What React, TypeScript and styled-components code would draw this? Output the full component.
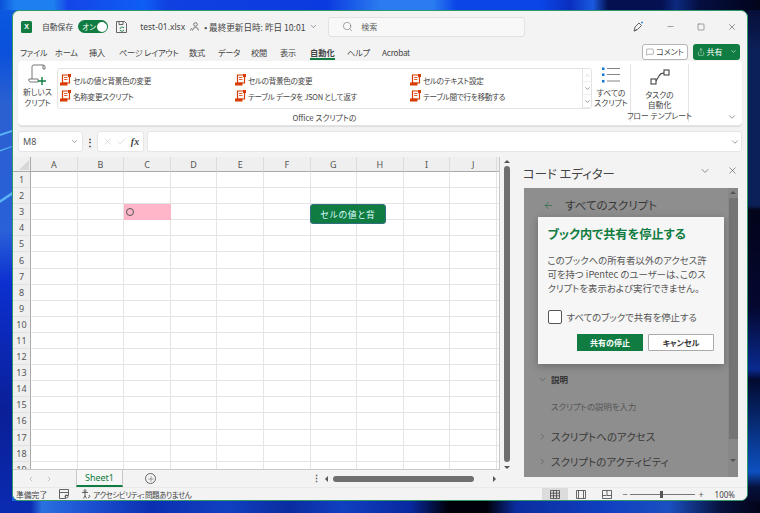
import React from "react";
import styled, { createGlobalStyle } from "styled-components";
import { ChevronDown, ChevronRight, Search, X, Minus, Square, ArrowLeft, Check, MessageSquare, Share, Plus } from "lucide-react";

const Global = createGlobalStyle`
  html, body { margin: 0; padding: 0; width: 760px; height: 513px; overflow: hidden; background: #0a2a9c; }
  * { box-sizing: border-box; }
  #root { width: 760px; height: 513px; }
`;
const FONT = `"Noto Sans CJK JP", "Noto Sans", sans-serif`;

const Desktop = styled.div`
  position: relative; width: 760px; height: 513px; padding: 10px 12px 12px;
  font-family: ${FONT}; font-feature-settings: "palt" 1; color: #333; overflow: hidden;
`;
const Wallpaper = styled.svg`position: absolute; inset: 0; width: 760px; height: 513px;`;
const Win = styled.div`
  position: relative; width: 736px; height: 491px; background: #f3f3f3;
  border: 1px solid #2f9a68; border-radius: 7px; overflow: hidden;
  display: flex; flex-direction: column;
`;
const Title = styled.div`
  height: 31px; display: flex; align-items: center; padding-left: 8px; flex: none; position: relative; font-size: 7.8px; color: #444;
`;
const XlLogo = styled.div`
  width: 11px; height: 12px; background: #107c41; border-radius: 1.5px; color: #fff; font-size: 7px; font-weight: 700;
  font-family: "Liberation Sans", sans-serif; display: flex; align-items: center; justify-content: center; margin-right: 10px;
`;
const Toggle = styled.div`
  width: 30px; height: 13px; border-radius: 7px; background: #107c41; color: #fff; font-size: 7.5px; margin: 0 8px 0 5px;
  display: flex; align-items: center; justify-content: space-between; padding: 0 1.5px 0 4px;
  i { width: 10px; height: 10px; border-radius: 50%; background: #fff; display: block; }
`;
const FileName = styled.span`font-size: 8.5px; margin: 0 5px 0 13px; font-family: "Noto Sans", sans-serif;`;
const Meta = styled.span`font-size: 8.6px; width: 113px; display: inline-flex; align-items: center; gap: 3px; margin-left: 5px; white-space: nowrap;`;
const SearchBox = styled.div`
  margin-left: 11px; width: 197px; height: 20px; border: 1px solid #e2e2e2; border-radius: 3px; background: #f8f8f8;
  display: flex; align-items: center; padding-left: 13px; gap: 8px; font-size: 8px; color: #666;
`;
const WinButtons = styled.div`
  margin-left: auto; display: flex; align-items: center; gap: 22px; padding-right: 10px; color: #444;
`;
const Tabs = styled.div`
  height: 19px; flex: none; display: flex; align-items: center; font-size: 8.2px; padding: 0 0 0 7px; color: #444; gap: 0;
`;
const Tab = styled.div<{ $w: number; $on?: boolean }>`
  width: ${p => p.$w}px; flex: none; position: relative; white-space: nowrap; font-weight: ${p => (p.$on ? 700 : 400)};
  letter-spacing: ${p => (p.$on ? "0" : "-.25px")};
  &::after { content: ""; display: ${p => (p.$on ? "block" : "none")}; position: absolute; left: 0; width: 25px; bottom: -2px; height: 1.5px; background: #107c41; }
`;
const TabActions = styled.div`margin-left: auto; display: flex; gap: 5px; padding-right: 7px;`;
const CommentBtn = styled.div`
  width: 46px; height: 16px; border: 1px solid #b5b5b5; border-radius: 3px; background: #fff; font-size: 8px;
  display: flex; align-items: center; justify-content: center; gap: 2px; margin-left: 0;
`;
const ShareBtn = styled.div`
  width: 47px; height: 16px; border-radius: 3px; background: #107c41; color: #fff; font-size: 8px;
  display: flex; align-items: center; justify-content: center; gap: 2px;
`;
const Ribbon = styled.div`
  height: 65px; flex: none; margin: 0 5px; background: #fff; border-radius: 4px; border-bottom: 1px solid #e4e4e4;
  display: flex; position: relative; box-shadow: 0 1px 1px #ddd;
`;
const NewScript = styled.div`
  width: 39px; flex: none; display: flex; flex-direction: column; align-items: center; padding-top: 3px; font-size: 7.8px; line-height: 11px; text-align: center; color: #444;
`;
const GroupCol = styled.div`width: 535px; flex: none; display: flex; flex-direction: column; align-items: stretch;`;
const Gallery = styled.div`
  margin-top: 7px; height: 41px; border: 1px solid #e3e3e3; border-radius: 3px; display: flex; position: relative; padding: 3px 0 0 2px;
`;
const GalleryGrid = styled.div`
  flex: 1; display: grid; grid-template-columns: 175px 175px 1fr; grid-auto-rows: 16px;
`;
const Item = styled.div`
  display: flex; align-items: center; gap: 2px; font-size: 7.6px; letter-spacing: -.3px; color: #444; white-space: nowrap;
`;
const GalleryScroll = styled.div`
  width: 9px; flex: none; border-left: 1px solid #e3e3e3; margin-top: -3px; display: flex; flex-direction: column; color: #555;
  span { height: 13px; display: flex; align-items: center; justify-content: center; font-size: 6px; border-bottom: 1px solid #eee; }
`;
const GroupLabel = styled.div`font-size: 7.8px; text-align: center; height: 16px; line-height: 17px; color: #444;`;
const BigBtn = styled.div`
  width: 38px; flex: none; display: flex; flex-direction: column; align-items: center; padding-top: 6px; font-size: 7.8px; line-height: 9.5px; text-align: center; color: #444;
`;
const FlowGroup = styled.div`
  width: 59px; flex: none; margin-top: 3px; height: 58px; border-left: 1px solid #e3e3e3; border-right: 1px solid #e3e3e3;
  display: flex; flex-direction: column; align-items: center; font-size: 7.8px; line-height: 9.5px; text-align: center; color: #444;
  padding-top: 3px;
`;
const FlowCaption = styled.div`margin-top: auto; white-space: nowrap; font-size: 7.8px; line-height: 12px;`;
const RibbonChevron = styled.div`position: absolute; right: 5px; bottom: 3px; color: #444; display: flex;`;
const FormulaBar = styled.div`
  height: 21px; flex: none; margin: 5px 5px 0; display: flex; align-items: stretch; gap: 0;
`;
const NameBox = styled.div`
  width: 65px; background: #fff; border: 1px solid #e6e6e6; border-radius: 3px; font-size: 9px; color: #555;
  display: flex; align-items: center; justify-content: space-between; padding: 0 3px 0 4px; font-family: "Noto Sans", sans-serif;
`;
const Dots = styled.div`width: 14px; display: flex; align-items: center; justify-content: center; font-weight: 700; font-size: 10px;`;
const FnBox = styled.div`
  width: 47px; background: #fff; border: 1px solid #e6e6e6; border-radius: 3px; display: flex; align-items: center; justify-content: space-around; padding: 0 2px; color: #bbb;
  em { font-family: "Liberation Serif", serif; color: #444; font-size: 10px; font-weight: 700; }
`;
const FormulaInput = styled.div`
  flex: 1; margin-left: 3px; background: #fff; border: 1px solid #e6e6e6; border-radius: 3px; display: flex; align-items: center; justify-content: flex-end; padding-right: 1px; color: #444;
`;
const Main = styled.div`flex: 1; min-height: 0; display: flex; margin-top: 5px;`;
const SheetCol = styled.div`width: 500px; flex: none; display: flex; flex-direction: column;`;
const SheetArea = styled.div`height: 313px; flex: none; display: flex; position: relative;`;
const SheetGrid = styled.div`
  width: 487px; flex: none; overflow: hidden; display: grid; grid-template-columns: 18px repeat(10, 46.6px) 3px; grid-auto-rows: 16.1px; grid-template-rows: 15px;
  border-right: 1px solid #c8c8c8; border-bottom: 1px solid #c8c8c8; align-content: start; background: #fff; height: 313px;
`;
const Corner = styled.div`background: #efefef; border-bottom: 1px solid #aaa; border-right: 1px solid #aaa; position: relative;
  &::after { content: ""; position: absolute; right: 1px; bottom: 1px; border: 5px solid transparent; border-right-color: #d8d8d8; border-bottom-color: #d8d8d8; }
`;
const ColHead = styled.div`
  background: #efefef; border-bottom: 1px solid #aaa; border-right: 1px solid #dcdcdc; font-size: 9px; color: #555;
  display: flex; align-items: center; justify-content: center; font-family: "Noto Sans", sans-serif;
`;
const RowHead = styled.div`
  background: #efefef; border-right: 1px solid #aaa; border-bottom: 1px solid #e0e0e0; font-size: 9px; color: #555;
  display: flex; align-items: center; justify-content: center; font-family: "Noto Sans", sans-serif;
`;
const Cell = styled.div<{ $pink?: boolean }>`
  background: ${p => (p.$pink ? "#ffb6c8" : "#fff")}; border-right: 1px solid ${p => (p.$pink ? "#ffb6c8" : "#e4e4e4")}; border-bottom: 1px solid ${p => (p.$pink ? "#ffb6c8" : "#e4e4e4")};
  display: flex; align-items: center; padding-left: 2px;
`;
const Ring = styled.span`width: 8px; height: 8px; border: 1px solid #555; border-radius: 50%; display: block;`;
const ScriptButton = styled.div`
  position: absolute; left: 297px; top: 47px; width: 76px; height: 20px; border-radius: 3px; background: #107c41; border: 1px solid #2f6f80;
  color: #dff; font-size: 8.8px; display: flex; align-items: center; justify-content: center; letter-spacing: .8px;
`;
const VScroll = styled.div`
  width: 13px; flex: none; display: flex; flex-direction: column; align-items: center; background: #f3f3f3; padding-top: 3px; position: relative;
  b { width: 6px; height: 296px; border-radius: 3px; background: #6f6f6f; margin-top: 3px; display: block; }
`;
const Tri = styled.span<{ $d: "up" | "down" | "left" | "right" }>`
  display: block; width: 0; height: 0; border: 3.5px solid transparent; flex: none;
  ${p => p.$d === "up" && "border-bottom-color:#555;border-top-width:0;"}
  ${p => p.$d === "down" && "border-top-color:#555;border-bottom-width:0;"}
  ${p => p.$d === "left" && "border-right-color:#555;border-left-width:0;"}
  ${p => p.$d === "right" && "border-left-color:#555;border-right-width:0;"}
`;
const VDown = styled.div`margin-top: auto; margin-bottom: 1px;`;
const PanelDown = styled.div`margin-top: auto; margin-bottom: 15px;`;
const SheetTabs = styled.div`height: 17px; flex: none; display: flex; align-items: center; position: relative; background: #f3f3f3;`;
const NavArrows = styled.div`width: 64px; flex: none; display: flex; justify-content: center; padding-right: 10px; gap: 10px; color: #aaa;`;
const ActiveTab = styled.div`
  width: 47px; height: 17px; flex: none; margin-left: -1px; background: #f6f6f6; border-left: 1px solid #c8c8c8; border-right: 1px solid #c8c8c8; border-bottom: 2px solid #107c41; color: #107c41;
  font-size: 9px; text-align: center; line-height: 15px; font-family: "Noto Sans", sans-serif;
`;
const AddSheet = styled.div`
  width: 11px; height: 11px; border-radius: 50%; border: 1px solid #666; margin-left: 22px; display: flex; align-items: center; justify-content: center; color: #555;
`;
const HScroll = styled.div`
  margin-left: auto; display: flex; align-items: center; width: 201px; padding-right: 15px; gap: 3px; flex: none;
  i { font-style: normal; font-weight: 700; font-size: 9px; color: #555; margin-right: 8px; line-height: 8px; width: 2px; flex: none; }
  b { display: block; width: 141px; height: 6px; border-radius: 3px; background: #6f6f6f; margin: 0 16px 0 2px; flex: none; }
`;
const Pane = styled.div`flex: 1; min-width: 0; position: relative; display: flex; flex-direction: column; padding: 0 9px 0 11px;`;
const PaneHead = styled.div`
  height: 31px; flex: none; display: flex; align-items: center; font-size: 12.4px; color: #444; justify-content: space-between; padding-top: 3px; margin-left: -1px;
`;
const PaneIcons = styled.div`display: flex; gap: 16px; color: #444; margin-top: -7px; margin-right: 0; align-items: center;`;
const Panel = styled.div`
  height: 289px; flex: none; background: #8e8e8e; position: relative; display: flex; flex-direction: column; padding: 6px 0 0 18px; color: #333; overflow: hidden;
`;
const PanelScroll = styled.div`
  position: absolute; right: 0; top: 0; bottom: 0; width: 10px; background: #888; display: flex; flex-direction: column; align-items: center; padding-top: 3px;
  b { display: block; width: 9px; height: 241px; background: #757575; margin-top: 4px; }
`;
const Back = styled.div`display: flex; align-items: center; gap: 11px; margin-left: 1px; font-size: 11.5px; color: #383838; height: 20px; margin-top: 1px; white-space: nowrap;
  svg { color: #1c6a40; }
`;
const SectionDesc = styled.div`
  margin-top: 157px; margin-left: -4px; display: flex; align-items: center; gap: 4px; font-size: 8.5px; font-weight: 700; height: 14px; color: #333;
  svg { color: #444; }
`;
const DescHint = styled.div`font-size: 8.4px; margin: 13px 0 0 9px; height: 14px; line-height: 14px; color: #555;`;
const Section = styled.div`
  display: flex; align-items: center; gap: 4px; font-size: 10.5px; height: 25px; margin-left: -4px; color: #3a3a3a; white-space: nowrap;
  svg { color: #444; }
`;
const FirstSection = styled(Section)`margin-top: 11px;`;
const Dialog = styled.div`
  position: absolute; left: 14px; top: 29px; width: 186px; height: 147px; background: #f6f6f6; box-shadow: 0 2px 8px rgba(0,0,0,.25);
  padding: 7px 10px 0 9.5px; display: flex; flex-direction: column;
`;
const DlgTitle = styled.div`font-size: 12.2px; font-weight: 700; color: #107c41; line-height: 20px; white-space: nowrap;`;
const DlgBody = styled.div`font-size: 9.4px; line-height: 14px; color: #555; margin-top: 9px; height: 42px; white-space: nowrap;`;
const CheckRow = styled.div`display: flex; align-items: center; gap: 5px; font-size: 9.4px; color: #555; margin-top: 15px; white-space: nowrap;`;
const Box = styled.span`width: 14px; height: 14px; border: 1px solid #555; border-radius: 2px; background: #fff; flex: none;`;
const DlgBtns = styled.div`display: flex; justify-content: flex-end; gap: 5px; margin-top: 10px;`;
const Primary = styled.div`
  width: 66px; height: 17px; background: #107c41; color: #fff; font-size: 8px; font-weight: 700; display: flex; align-items: center; justify-content: center;
`;
const Secondary = styled.div`
  width: 66px; height: 17px; background: #fff; border: 1px solid #aaa; border-radius: 1px; color: #333; font-size: 8px; font-weight: 700; display: flex; align-items: center; justify-content: center;
`;
const Status = styled.div`
  height: 13px; flex: none; display: flex; align-items: center; font-size: 7.8px; color: #444; padding-left: 3px; background: #f3f3f3; border-top: 1px solid #eaeaea; position: relative;
`;
const StatusGap = styled.span`margin-left: 12px; display: inline-flex; align-items: center; gap: 2px; white-space: nowrap;`;
const AccText = styled.span`font-size: 7.5px; letter-spacing: -.45px;`;
const StatusRight = styled.div`margin-left: auto; display: flex; align-items: center; height: 100%; padding-right: 12px; font-family: "Noto Sans", sans-serif;`;
const ViewBtn = styled.div<{ $on?: boolean }>`
  width: 26px; height: 13px; background: ${p => (p.$on ? "#dcdcdc" : "transparent")}; display: flex; align-items: center; justify-content: center;
`;
const Zoom = styled.div`
  display: flex; align-items: center; gap: 3px; margin-left: 2px; color: #555; font-size: 9px;
`;
const ZoomTrack = styled.div`
  width: 65px; height: 1px; background: #777; position: relative; flex: none;
  &::after { content: ""; position: absolute; left: 30px; top: -3px; width: 3px; height: 7px; background: #555; }
`;
const ZoomVal = styled.span`margin-left: 8px; font-size: 8px; color: #444;`;

const ScriptIcon = () => (
  <svg width="11" height="12" viewBox="0 0 11 12" style={{ flex: "none" }}>
    <path d="M2.5 1h7v8h-7z" fill="#fff" stroke="#d83b01" strokeWidth="1.2" />
    <rect x="8" y="0" width="3" height="3" fill="#d83b01" />
    <rect x="0" y="8.5" width="7.5" height="3" fill="#d83b01" />
    <path d="M4 3.5h3.5M4 5.5h3.5" stroke="#d83b01" strokeWidth=".8" />
  </svg>
);

const items = [
  "セルの値と背景色の変更", "セルの背景色の変更", "セルのテキスト設定",
  "名称変更スクリプト", "テーブル データを JSON として返す", "テーブル間で行を移動する",
];
const cols = ["A", "B", "C", "D", "E", "F", "G", "H", "I", "J", ""];
const rows = Array.from({ length: 19 }, (_, i) => i + 1);
const tabs: [string, number, boolean?][] = [
  ["ファイル", 35], ["ホーム", 34], ["挿入", 30], ["ページ レイアウト", 70], ["数式", 29], ["データ", 33], ["校閲", 29], ["表示", 30], ["自動化", 37, true], ["ヘルプ", 35], ["Acrobat", 40],
];

export default function App() {
  return (
    <Desktop>
      <Global />
      <Wallpaper viewBox="0 0 760 513" preserveAspectRatio="none">
        <defs>
          <linearGradient id="bg" x1="0" y1="0" x2="1" y2="0">
            <stop offset="0" stopColor="#1560dc" />
            <stop offset="0.5" stopColor="#0a3cc0" />
            <stop offset="1" stopColor="#020824" />
          </linearGradient>
          <linearGradient id="top" x1="0" y1="0" x2="1" y2="0">
            <stop offset="0" stopColor="#0a4fd8" />
            <stop offset="0.02" stopColor="#1e80f0" />
            <stop offset="0.07" stopColor="#1e80f0" />
            <stop offset="0.09" stopColor="#1545e8" />
            <stop offset="0.19" stopColor="#0e5ef5" />
            <stop offset="0.22" stopColor="#1040e0" />
            <stop offset="0.43" stopColor="#0b3be0" />
            <stop offset="0.5" stopColor="#2a7cf0" />
            <stop offset="0.57" stopColor="#2a7cf0" />
            <stop offset="0.6" stopColor="#0b45e8" />
            <stop offset="0.71" stopColor="#0b45e8" />
            <stop offset="0.75" stopColor="#0a2fc0" />
            <stop offset="0.78" stopColor="#1a5ae0" />
            <stop offset="0.8" stopColor="#041050" />
            <stop offset="0.87" stopColor="#041050" />
            <stop offset="0.89" stopColor="#0c2a80" />
            <stop offset="0.92" stopColor="#050e40" />
            <stop offset="1" stopColor="#02041a" />
          </linearGradient>
          <linearGradient id="bottom" x1="0" y1="0" x2="1" y2="0">
            <stop offset="0" stopColor="#0a2ab0" />
            <stop offset="0.04" stopColor="#0a2ab0" />
            <stop offset="0.055" stopColor="#2a70e0" />
            <stop offset="0.12" stopColor="#1a50d0" />
            <stop offset="0.2" stopColor="#0a30b0" />
            <stop offset="0.3" stopColor="#1040c0" />
            <stop offset="0.38" stopColor="#0a2ca0" />
            <stop offset="0.45" stopColor="#1040c0" />
            <stop offset="0.54" stopColor="#0828a0" />
            <stop offset="0.59" stopColor="#000008" />
            <stop offset="0.64" stopColor="#000008" />
            <stop offset="0.68" stopColor="#0a2ea0" />
            <stop offset="0.8" stopColor="#1040c0" />
            <stop offset="0.88" stopColor="#1a50c0" />
            <stop offset="0.95" stopColor="#06103a" />
            <stop offset="1" stopColor="#02041a" />
          </linearGradient>
          <linearGradient id="left" x1="0" y1="0" x2="0" y2="1">
            <stop offset="0" stopColor="#0a5ce0" />
            <stop offset="0.1" stopColor="#0a50dc" />
            <stop offset="0.2" stopColor="#2a60d0" />
            <stop offset="0.45" stopColor="#2a60d8" />
            <stop offset="0.55" stopColor="#0c30d0" />
            <stop offset="0.8" stopColor="#0a1f98" />
            <stop offset="1" stopColor="#0a2ab0" />
          </linearGradient>
          <linearGradient id="right" x1="0" y1="0" x2="0" y2="1">
            <stop offset="0" stopColor="#050a30" />
            <stop offset="0.1" stopColor="#0c2058" />
            <stop offset="0.4" stopColor="#0c2058" />
            <stop offset="0.41" stopColor="#02041a" />
            <stop offset="0.6" stopColor="#040830" />
            <stop offset="0.72" stopColor="#0a2a90" />
            <stop offset="0.74" stopColor="#020a30" />
            <stop offset="0.92" stopColor="#0d50c0" />
            <stop offset="0.95" stopColor="#06103a" />
            <stop offset="1" stopColor="#02041a" />
          </linearGradient>
        </defs>
        <rect width="760" height="513" fill="url(#bg)" />
        <rect x="0" y="0" width="12" height="513" fill="url(#left)" />
        <rect x="748" y="0" width="12" height="513" fill="url(#right)" />
        <rect x="0" y="0" width="760" height="10" fill="url(#top)" />
        <rect x="0" y="501" width="760" height="12" fill="url(#bottom)" />
        <path d="M0 134 L12 130 L12 132 L0 136z M0 200 L12 192 L12 195 L0 203z M0 150 L12 146 L12 147 L0 151.5z" fill="#5ab4f4" />
      </Wallpaper>
      <Win>
        <Title>
          <XlLogo>X</XlLogo>
          <span>自動保存</span>
          <Toggle>オン<i /></Toggle>
          <svg width="11" height="12" viewBox="0 0 11 12" fill="none" stroke="#555" strokeWidth=".9">
            <path d="M.5.5h8l2 2v9H.5z" /><path d="M3 .5v3h4v-3" /><path d="M4 8a2.2 2.2 0 0 1 4-1M8 9a2.2 2.2 0 0 1-4 0" stroke="#107c41" />
          </svg>
          <FileName>test-01.xlsx</FileName>
          <svg width="9" height="9" viewBox="0 0 9 9" fill="none" stroke="#555" strokeWidth=".8">
            <circle cx="5.5" cy="2.5" r="1.8" /><path d="M2.5 8.5a3 3 0 0 1 6 0M.5 8.5a2 2 0 0 1 1.5-2" />
          </svg>
          <Meta>• 最終更新日時: 昨日 10:01 <ChevronDown size={9} strokeWidth={1.4} /></Meta>
          <SearchBox><Search size={11} strokeWidth={1.2} />検索</SearchBox>
          <WinButtons>
            <svg width="11" height="12" viewBox="0 0 11 12" fill="none" stroke="#555" strokeWidth=".9">
              <path d="M1 10l1-4 4-4 2.5 2.5-4 4zM1 10l3-1.5" /><path d="M9 .5v2M8 1.5h2" stroke="#2b88d8" />
            </svg>
            <Minus size={9} strokeWidth={1.3} />
            <Square size={8} strokeWidth={1.4} />
            <X size={10} strokeWidth={1.3} />
          </WinButtons>
        </Title>
        <Tabs>
          {tabs.map(([t, w, on]) => <Tab key={t} $w={w} $on={on}>{t}</Tab>)}
          <TabActions>
            <CommentBtn><MessageSquare size={8} strokeWidth={1.2} />コメント</CommentBtn>
            <ShareBtn><Share size={8} strokeWidth={1.3} />共有<ChevronDown size={7} strokeWidth={2} style={{ marginLeft: 5 }} /></ShareBtn>
          </TabActions>
        </Tabs>
        <Ribbon>
          <NewScript>
            <svg width="20" height="22" viewBox="0 0 20 22" fill="none" stroke="#666" strokeWidth=".9">
              <path d="M5 1h10v4M5 1a2 2 0 0 0-1 2v12M15 1a2 2 0 0 1 2 2v2h-2M1 15h9v3H3a2 2 0 0 1-2-3z" />
              <path d="M14 13v8M10 17h8" stroke="#107c41" strokeWidth="1.4" />
            </svg>
            <span>新しいス</span><span>クリプト</span>
          </NewScript>
          <GroupCol>
            <Gallery>
              <GalleryGrid>
                {items.map(t => <Item key={t}><ScriptIcon />{t}</Item>)}
              </GalleryGrid>
              <GalleryScroll>
                <span><ChevronDown size={7} style={{ transform: "rotate(180deg)", color: "#bbb" }} /></span>
                <span><ChevronDown size={7} /></span>
                <span><ChevronDown size={7} /></span>
              </GalleryScroll>
            </Gallery>
            <GroupLabel>Office スクリプトの</GroupLabel>
          </GroupCol>
          <BigBtn>
            <svg width="20" height="17" viewBox="0 0 20 17" style={{ marginBottom: 4 }}>
              <path d="M1 .5h2.5v2.5H1zM1 6.5h2.5v2.5H1zM1 13h2.5v2.5H1z" fill="#0f78d4" />
              <path d="M6 1.5h13M6 7.5h13M6 14h13" stroke="#777" strokeWidth=".9" />
            </svg>
            <span>すべての</span><span>スクリプト</span>
          </BigBtn>
          <FlowGroup>
            <svg width="20" height="17" viewBox="0 0 20 17" fill="none" stroke="#444" strokeWidth="1.1" style={{ marginTop: 2 }}>
              <rect x="1" y="10" width="5" height="5" /><rect x="14" y="1" width="5" height="5" />
              <path d="M6 12l3-5c1-2 3-3 5-3" />
            </svg>
            <span style={{ marginTop: 4 }}>タスクの</span><span>自動化</span>
            <FlowCaption>フロー テンプレート</FlowCaption>
          </FlowGroup>
          <RibbonChevron><ChevronDown size={10} strokeWidth={1.3} /></RibbonChevron>
        </Ribbon>
        <FormulaBar>
          <NameBox>M8<ChevronDown size={9} strokeWidth={1.4} /></NameBox>
          <Dots>⋮</Dots>
          <FnBox><X size={11} strokeWidth={1} /><Check size={11} strokeWidth={1} /><em>fx</em></FnBox>
          <FormulaInput><ChevronDown size={10} strokeWidth={1.3} /></FormulaInput>
        </FormulaBar>
        <Main>
          <SheetCol>
            <SheetArea>
              <SheetGrid>
                <Corner />
                {cols.map(c => <ColHead key={c}>{c}</ColHead>)}
                {rows.map(r => (
                  <React.Fragment key={r}>
                    <RowHead>{r}</RowHead>
                    {cols.map(c => (
                      <Cell key={c} $pink={r === 3 && c === "C"}>{r === 3 && c === "C" && <Ring />}</Cell>
                    ))}
                  </React.Fragment>
                ))}
              </SheetGrid>
              <ScriptButton>セルの値と背</ScriptButton>
              <VScroll>
                <Tri $d="up" />
                <b />
                <VDown><Tri $d="down" /></VDown>
              </VScroll>
            </SheetArea>
            <SheetTabs>
              <NavArrows><ChevronRight size={8} style={{ transform: "rotate(180deg)" }} /><ChevronRight size={8} /></NavArrows>
              <ActiveTab>Sheet1</ActiveTab>
              <AddSheet><Plus size={8} strokeWidth={1.5} /></AddSheet>
              <HScroll><i>⋮</i><Tri $d="left" /><b /><Tri $d="right" /></HScroll>
            </SheetTabs>
          </SheetCol>
          <Pane>
            <PaneHead>
              コード エディター
              <PaneIcons><ChevronDown size={12} strokeWidth={1.2} /><X size={11} strokeWidth={1.2} /></PaneIcons>
            </PaneHead>
            <Panel>
              <Back><ArrowLeft size={11} strokeWidth={1.4} />すべてのスクリプト</Back>
              <SectionDesc><ChevronDown size={9} strokeWidth={1.3} />説明</SectionDesc>
              <DescHint>スクリプトの説明を入力</DescHint>
              <FirstSection><ChevronRight size={9} strokeWidth={1.3} />スクリプトへのアクセス</FirstSection>
              <Section><ChevronRight size={9} strokeWidth={1.3} />スクリプトのアクティビティ</Section>
              <PanelScroll>
                <Tri $d="up" />
                <b />
                <PanelDown><Tri $d="down" /></PanelDown>
              </PanelScroll>
              <Dialog>
                <DlgTitle>ブック内で共有を停止する</DlgTitle>
                <DlgBody>
                  このブックへの所有者以外のアクセス許<br />
                  可を持つ iPentec のユーザーは、このス<br />
                  クリプトを表示および実行できません。
                </DlgBody>
                <CheckRow><Box />すべてのブックで共有を停止する</CheckRow>
                <DlgBtns><Primary>共有の停止</Primary><Secondary>キャンセル</Secondary></DlgBtns>
              </Dialog>
            </Panel>
          </Pane>
        </Main>
        <Status>
          準備完了
          <StatusGap>
            <svg width="10" height="10" viewBox="0 0 10 10" fill="none" stroke="#555" strokeWidth=".9"><path d="M.5.5h9v6h-3v3h-6zM.5 3.5h9" /><circle cx="7.5" cy="7.5" r="1.5" /></svg>
          </StatusGap>
          <StatusGap>
            <svg width="10" height="10" viewBox="0 0 10 10" fill="none" stroke="#555" strokeWidth=".9"><circle cx="4" cy="1.7" r="1" /><path d="M1 3.5h6M4 3.5v3L2.5 9.5M4 6.5l1.5 3M8 6l1 1.5L7 9" /></svg>
            <AccText>アクセシビリティ: 問題ありません</AccText>
          </StatusGap>
          <StatusRight>
            <ViewBtn $on><svg width="10" height="9" viewBox="0 0 10 9" fill="none" stroke="#444" strokeWidth=".8"><path d="M.5.5h9v8h-9zM.5 3.2h9M.5 5.8h9M3.5.5v8M6.5.5v8" /></svg></ViewBtn>
            <ViewBtn><svg width="10" height="9" viewBox="0 0 10 9" fill="none" stroke="#444" strokeWidth=".8"><path d="M.5.5h9v8h-9zM2.5.5v8M7.5.5v8" /></svg></ViewBtn>
            <ViewBtn><svg width="10" height="9" viewBox="0 0 10 9" fill="none" stroke="#444" strokeWidth=".8"><path d="M.5.5h9v8h-9zM.5 5.5h4M5 .5v5h4.5" /></svg></ViewBtn>
            <Zoom>−<ZoomTrack />+<ZoomVal>100%</ZoomVal></Zoom>
          </StatusRight>
        </Status>
      </Win>
    </Desktop>
  );
}
